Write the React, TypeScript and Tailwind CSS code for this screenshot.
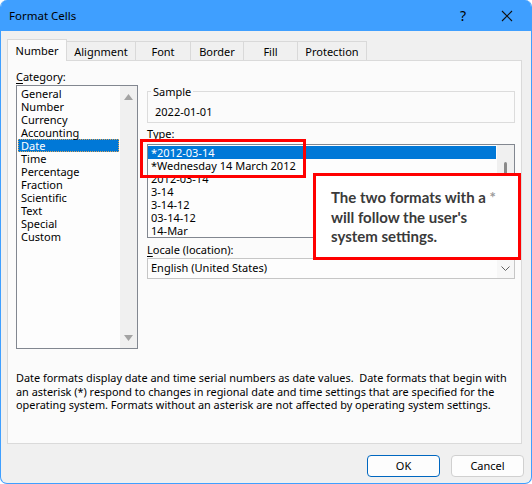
import React from "react";

const cats = ["General", "Number", "Currency", "Accounting", "Date", "Time", "Percentage", "Fraction", "Scientific", "Text", "Special", "Custom"];
const types = ["*2012-03-14", "*Wednesday 14 March 2012", "2012-03-14", "3-14", "3-14-12", "03-14-12", "14-Mar"];

function Tri({ down }: { down?: boolean }) {
  return (
    <svg width="9" height="6" viewBox="0 0 9 6" className="block">
      {down ? <polygon points="0,0 9,0 4.5,6" fill="#a3a3a3" /> : <polygon points="0,6 9,6 4.5,0" fill="#a3a3a3" />}
    </svg>
  );
}

export default function App() {
  return (
    <div className="w-[532px] h-[484px] bg-white font-['Noto_Sans',sans-serif] text-[11px] text-black">
      <div className="relative flex flex-col w-full h-full bg-[#f0f0f0] rounded-[7px] border border-t-0 border-[#3f9fff] overflow-hidden">
        {/* Title bar */}
        <div className="h-[31px] shrink-0 bg-[#3f9fff] flex items-center pl-[8px]">
          <span className="text-[11.5px] leading-[16px]">Format Cells</span>
          <span className="ml-auto text-[14px] leading-[16px] mr-[35px]">?</span>
          <svg width="12" height="12" viewBox="0 0 12 12" className="mr-[18px]">
            <path d="M1 1 L11 11 M11 1 L1 11" stroke="#111" strokeWidth="1.1" />
          </svg>
        </div>

        {/* Tabs */}
        <div className="mt-[8px] h-[21px] pl-[6px] flex items-end relative z-10">
          <div className="w-[60px] -mb-[1px] h-[22px] border border-b-0 border-[#d9d9d9] bg-[#fbfbfb] flex items-center justify-center pt-[1px]">Number</div>
          {[
            ["Alignment", "w-[69px]"],
            ["Font", "w-[55px]"],
            ["Border", "w-[53px]"],
            ["Fill", "w-[54px]"],
            ["Protection", "w-[69px]"],
          ].map(([t, w]) => (
            <div key={t} className={`${w} h-[19px] border-t border-r border-[#d9d9d9] bg-[#f0f0f0] flex items-center justify-center pt-[3px]`}>
              {t}
            </div>
          ))}
        </div>

        {/* Panel */}
        <div className="ml-[6px] w-[515px] h-[384px] shrink-0 border border-[#dadada] bg-[#fbfbfb] flex flex-col pl-[8px] pt-[8px]">
          <div className="flex">
            {/* Left column */}
            <div className="w-[122px] flex flex-col">
              <div className="leading-[15px]">
                <span className="underline underline-offset-2">C</span>ategory:
              </div>
              <div className="mt-[1px] h-[264px] border border-[#828790] bg-[#fdfdfd] flex">
                <div className="flex-1 pt-[1px] pl-[1px] pr-[1px]">
                  {cats.map((c) => (
                    <div
                      key={c}
                      className={
                        c === "Date"
                          ? "h-[13px] leading-[11px] pl-[2px] bg-[#0078d7] text-white border border-dotted border-[#d9a45c]"
                          : "h-[13px] leading-[13px] pl-[3px]"
                      }
                    >
                      {c}
                    </div>
                  ))}
                </div>
                <div className="w-[17px] bg-[#f0f0f0] flex flex-col items-center justify-between pt-[8px] pb-[7px]">
                  <Tri />
                  <Tri down />
                </div>
              </div>
            </div>

            {/* Right column */}
            <div className="ml-[9px] w-[368px] flex flex-col">
              <fieldset className="mt-[13px] border border-[#dcdcdc] pb-[2px]">
                <legend className="ml-[3px] px-[2px] pt-[2px] leading-[16px]">Sample</legend>
                <div className="pt-[4px] pl-[7px] leading-[16px]">2022-01-01</div>
              </fieldset>
              <div className="mt-[3px] leading-[15px]">Type:</div>
              <div className="mt-[3px] h-[94px] border border-[#828790] bg-[#fdfdfd] flex overflow-hidden">
                <div className="flex-1 pt-[1px] overflow-hidden">
                  {types.map((t, i) => (
                    <div
                      key={t}
                      className={
                        i === 0
                          ? "h-[13px] leading-[13px] pl-[3px] bg-[#0078d7] text-white whitespace-nowrap"
                          : "h-[13px] leading-[13px] pl-[3px] whitespace-nowrap"
                      }
                    >
                      {t}
                    </div>
                  ))}
                </div>
                <div className="w-[17px] ml-[1px] bg-[#f0f0f0] flex justify-center pt-[17px]">
                  <div className="w-[3px] h-[40px] bg-[#8a8a8a] rounded-full" />
                </div>
              </div>
              <div className="mt-[4px] leading-[15px]">
                <span className="underline underline-offset-2">L</span>ocale (location):
              </div>
              <div className="mt-[1px] h-[21px] border border-[#c6c6c6] bg-[#fdfdfd] flex items-center">
                <span className="pl-[3px] flex-1">English (United States)</span>
                <div className="w-[17px] h-full flex items-center justify-center bg-[#f7f7f7]">
                  <svg width="9" height="5" viewBox="0 0 9 5">
                    <path d="M0.5 0.5 L4.5 4.5 L8.5 0.5" fill="none" stroke="#606060" strokeWidth="1" />
                  </svg>
                </div>
              </div>
            </div>
          </div>

          <div className="mt-[22px] leading-[13.5px] whitespace-nowrap text-[10.9px]">
            Date formats display date and time serial numbers as date values.&nbsp; Date formats that begin with
            <br />
            an asterisk (*) respond to changes in regional date and time settings that are specified for the
            <br />
            operating system. Formats without an asterisk are not affected by operating system settings.
          </div>
        </div>

        {/* Buttons */}
        <div className="mt-[11px] flex justify-end gap-[11px] pr-[7px]">
          <button className="w-[73px] h-[22px] rounded-[4px] border border-[#0067c0] bg-[#fdfdfd] text-[11px] leading-[16px]">OK</button>
          <button className="w-[73px] h-[22px] rounded-[4px] border border-[#d0d0d0] bg-[#fdfdfd] text-[11px] leading-[16px]">Cancel</button>
        </div>

        {/* Annotation overlays */}
        <div className="absolute left-[139px] top-[139px] w-[166px] h-[39px] border-[3px] border-[#ff0000]" />
        <div className="absolute left-[312px] top-[173px] w-[208px] h-[87px] border-[3px] border-[#ff0000] bg-white pl-[15px] pt-[12px] font-['Lato',sans-serif] font-bold text-[15px] leading-[19.5px] text-[#3a3a3a]">
          The two formats with a <span className="text-[#9a9a9a]">*</span>
          <br />
          will follow the user's
          <br />
          system settings.
        </div>
      </div>
    </div>
  );
}
